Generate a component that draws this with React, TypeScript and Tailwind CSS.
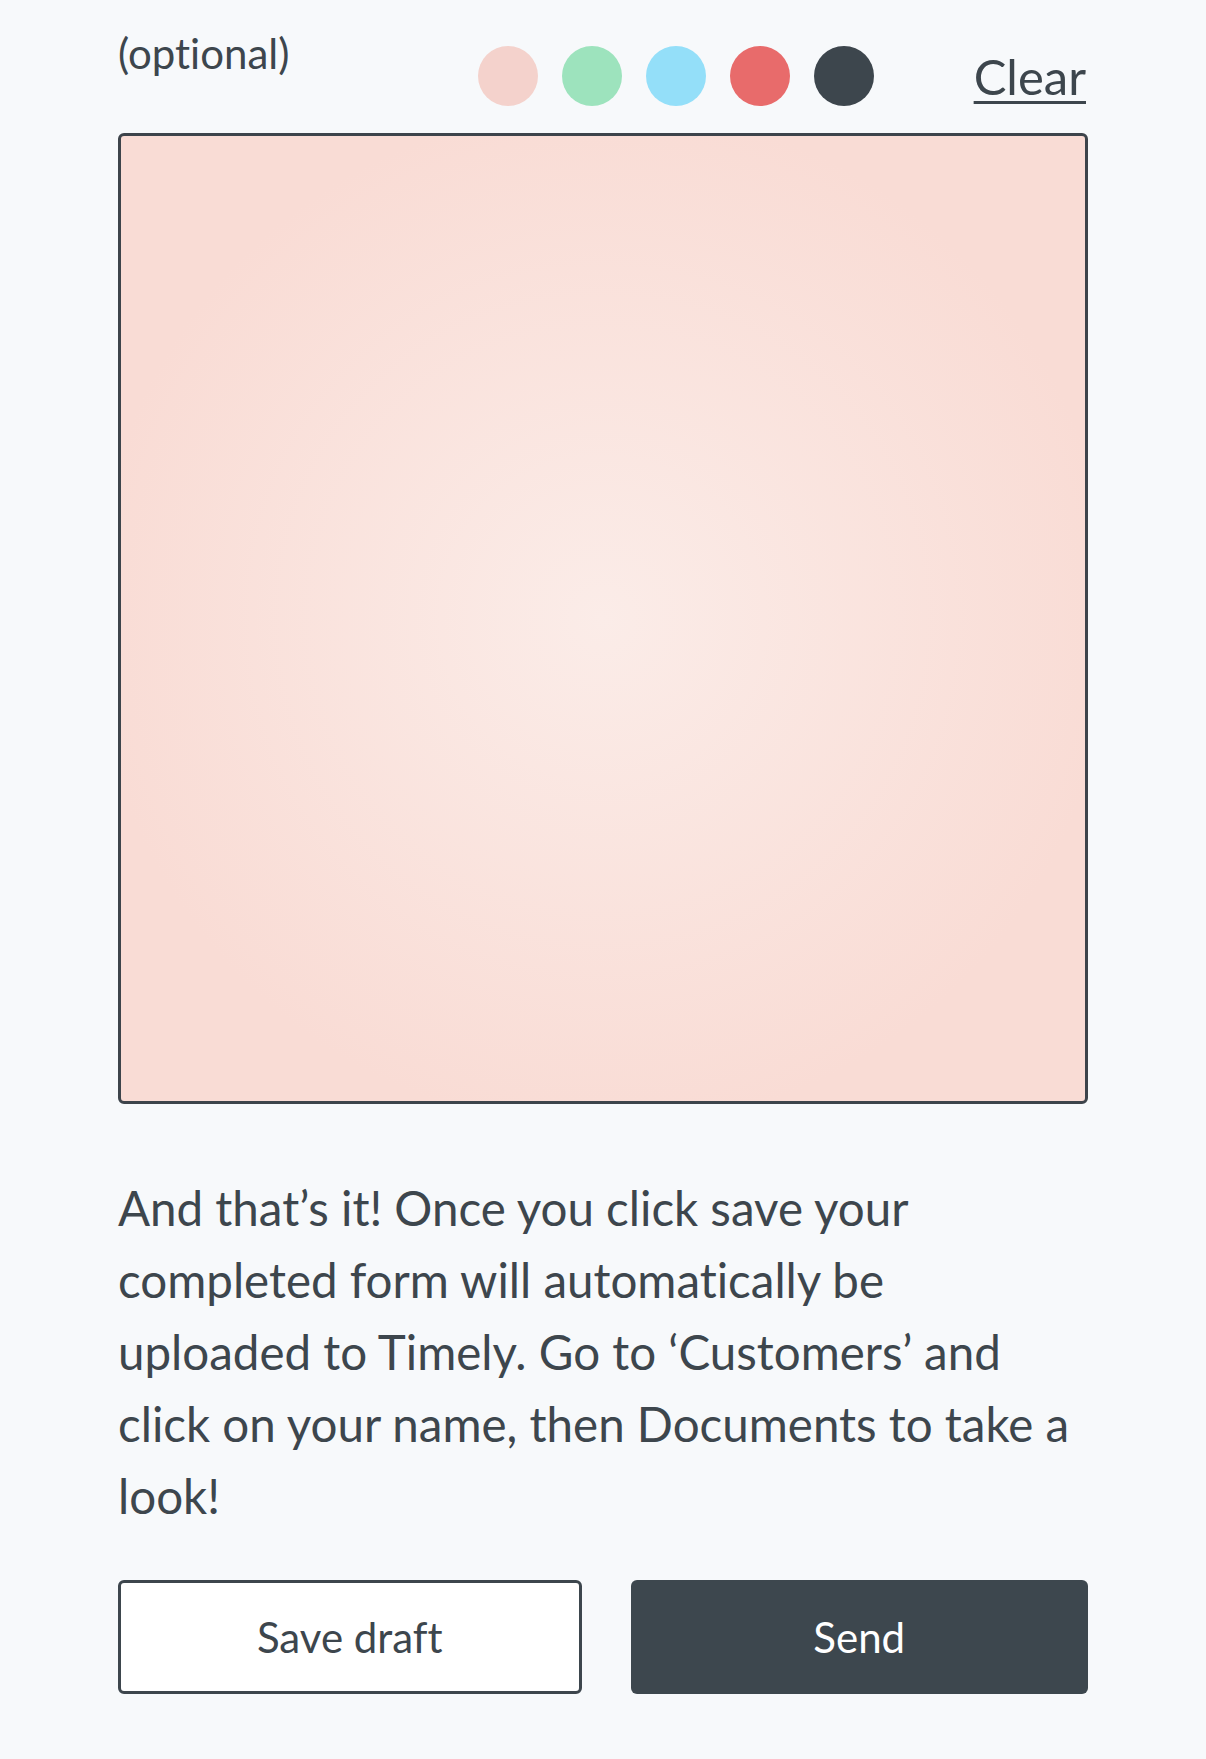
export default function App() {
  const colors = ["bg-[#f4d2cc]", "bg-[#9de3bd]", "bg-[#94dff9]", "bg-[#e86b6b]", "bg-[#3d464d]"];
  return (
    <div
      className="min-h-[1759px] w-full bg-[#f7f9fb] px-[118px] pb-[66px] text-[#3d464d] [font-variant-ligatures:none]"
      style={{ fontFamily: "Lato, 'Open Sans', sans-serif" }}
    >
      <div className="flex items-start justify-between">
        <div className="mt-[28px] text-[42px] leading-[1.2]">(optional)</div>
        <div className="mt-[46px] flex items-center">
          <div className="flex items-center gap-[24px]">
            {colors.map((c, i) => (
              <div key={i} className={`h-[60px] w-[60px] rounded-full ${c}`} />
            ))}
          </div>
          <button className="ml-[100px] mr-[2px] text-[49px] leading-[1.2] underline decoration-[3px] underline-offset-[6px]">
            Clear
          </button>
        </div>
      </div>
      <div className="mt-[27px] h-[971px] w-full rounded-[6px] border-[3px] border-[#3d444b] bg-[radial-gradient(circle_at_center,#fbece8_0%,#f9dcd5_75%)]" />
      <p className="mt-[68px] text-[47.5px] leading-[72px]">
        And that’s it! Once you click save your completed form will automatically be uploaded to Timely. Go to ‘Customers’ and click on your name, then Documents to take a look!
      </p>
      <div className="mt-[48px] flex gap-[49px]">
        <button className="h-[114px] flex-1 rounded-[6px] border-[3px] border-[#3d464d] bg-white text-[42px] text-[#3d464d]">
          Save draft
        </button>
        <button className="h-[114px] flex-1 rounded-[6px] bg-[#3d474e] text-[42px] text-white">
          Send
        </button>
      </div>
    </div>
  );
}
